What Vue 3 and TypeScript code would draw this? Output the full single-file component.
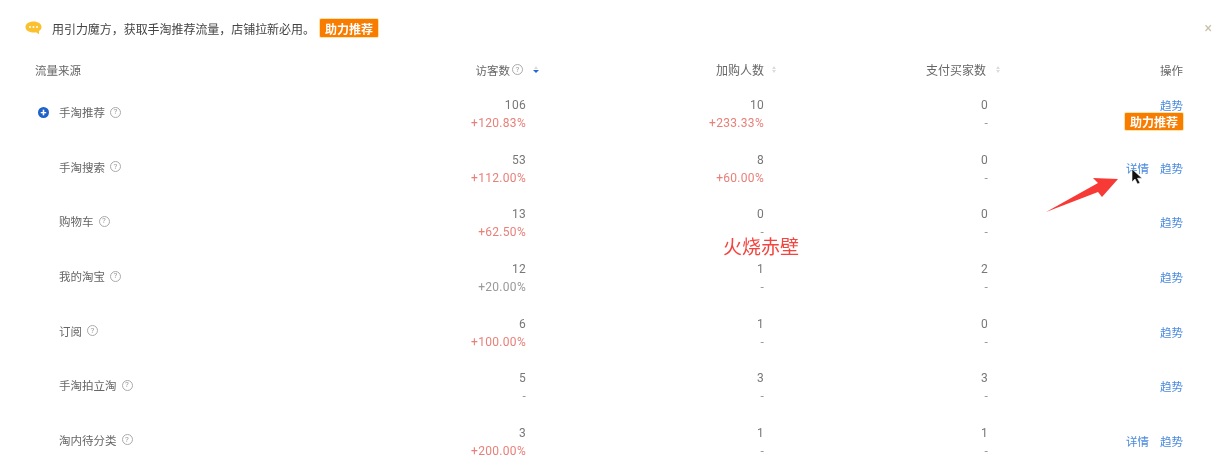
<script setup lang="ts">
interface Metric { value: string; change: string; tone?: 'up' | 'flat' }
interface Row { name: string; expand?: boolean; cells: Metric[]; detail?: boolean; boost?: boolean }

const up = (value: string, change: string): Metric => ({ value, change, tone: 'up' })
const flat = (value: string, change = '-'): Metric => ({ value, change, tone: 'flat' })

const rows: Row[] = [
  { name: '手淘推荐', expand: true, boost: true, cells: [up('106', '+120.83%'), up('10', '+233.33%'), flat('0')] },
  { name: '手淘搜索', detail: true, cells: [up('53', '+112.00%'), up('8', '+60.00%'), flat('0')] },
  { name: '购物车', cells: [up('13', '+62.50%'), flat('0'), flat('0')] },
  { name: '我的淘宝', cells: [flat('12', '+20.00%'), flat('1'), flat('2')] },
  { name: '订阅', cells: [up('6', '+100.00%'), flat('1'), flat('0')] },
  { name: '手淘拍立淘', cells: [flat('5'), flat('3'), flat('3')] },
  { name: '淘内待分类', detail: true, cells: [up('3', '+200.00%'), flat('1'), flat('1')] },
]
</script>

<template>
  <div class="page">
    <div class="banner">
      <svg class="chat" viewBox="0 0 17 14" width="17" height="14">
        <path d="M8.5 0.5C4 0.5 0.5 2.8 0.5 6s3.500 5.500 8 5.500c.9 0 1.700-.1 2.500-.3L14 13.300v-3.200c1.600-1 2.500-2.400 2.500-4.100 0-3.200-3.500-5.500-8-5.500z" fill="#fbc02d" />
        <circle cx="5" cy="6" r="1" fill="#fff" />
        <circle cx="8.500" cy="6" r="1" fill="#fff" />
        <circle cx="12" cy="6" r="1" fill="#fff" />
      </svg>
      <span class="banner-text">用引力魔方，获取手淘推荐流量，店铺拉新必用。</span>
      <span class="boost">助力推荐</span>
      <span class="close">×</span>
    </div>

    <div class="table">
      <div class="head">
        <div class="col-name">流量来源</div>
        <div class="col-num head-num">访客数<i class="tip tip-head">?</i><span class="sort"><b class="tri-up"></b><b class="tri-down on"></b></span></div>
        <div class="col-num head-num head-wide">加购人数<span class="sort"><b class="tri-up"></b><b class="tri-down"></b></span></div>
        <div class="col-num head-num head-wide">支付买家数<span class="sort"><b class="tri-up"></b><b class="tri-down"></b></span></div>
        <div class="col-act">操作</div>
      </div>

      <div v-for="row in rows" :key="row.name" class="row">
        <div class="col-name name">
          <span class="plus-slot"><span v-if="row.expand" class="plus">+</span></span>
          <span>{{ row.name }}</span><i class="tip">?</i>
        </div>
        <div v-for="(c, i) in row.cells" :key="i" class="col-num num">
          <div class="value">{{ c.value }}</div>
          <div :class="c.tone === 'up' ? 'change-up' : 'change-flat'">{{ c.change }}</div>
        </div>
        <div class="col-act act">
          <div class="links">
            <a v-if="row.detail">详情</a>
            <a>趋势</a>
          </div>
          <span v-if="row.boost" class="boost boost-row">助力推荐</span>
        </div>
      </div>
    </div>

    <div class="watermark">火烧赤壁</div>

    <svg class="arrow" viewBox="0 0 76 38" width="76" height="38">
      <polygon points="0,36 52,7 47,2 72,3 56,21 52,16" fill="#f83a36" />
    </svg>
    <svg class="cursor" viewBox="0 0 12 18" width="12" height="18">
      <path d="M1 1v13l3-3 2.500 5 2.500-1-2.500-4.800H11z" fill="#111" stroke="#fff" stroke-width=".6" />
    </svg>
  </div>
</template>

<style scoped>
.page {
  position: relative;
  width: 1219px;
  height: 465px;
  overflow: hidden;
  background: #fff;
  color: #666;
  font-family: Roboto, "Noto Sans CJK SC", sans-serif;
  font-size: 11.500px;
  filter: blur(0.5px);
}
.banner {
  display: flex;
  align-items: center;
  height: 56px;
  padding: 0 7px 0 25px;
  color: #444;
  font-size: 12px;
}
.chat { flex: none; }
.banner-text { margin-left: 10px; letter-spacing: -0.05px; }
.boost {
  display: inline-flex;
  align-items: center;
  justify-content: center;
  width: 58px;
  height: 18px;
  background: #f77c00;
  color: #fff;
  font-size: 12px;
  font-weight: 700;
  border-radius: 1px;
  box-shadow: 0 0 0 1px #ffe3a6;
}
.banner .boost { margin-left: 5px; }
.close {
  margin-left: auto;
  color: #c8bfa6;
  font-size: 14px;
  line-height: 1;
}
.table { padding: 0 36px 0 35px; }
.head, .row {
  display: grid;
  grid-template-columns: 1fr 220px 238px 224px 175px;
}
.head {
  height: 27px;
  margin-bottom: 4px;
  align-items: center;
  color: #666;
}
.row {
  height: 54.600px;
  align-items: center;
}
.col-num { padding-right: 20px; text-align: right; }
.col-act { text-align: right; }
.head-num {
  display: flex;
  justify-content: flex-end;
  align-items: center;
  position: relative;
}
.head-wide { font-size: 12px; }
.head-wide + .head-wide { padding-right: 22px; }
.sort {
  position: absolute;
  right: 0;
  top: 50%;
  width: 20px;
  height: 9px;
  margin-top: -4px;
  display: flex;
  flex-direction: column;
  align-items: center;
  gap: 1px;
}
.tri-up, .tri-down { width: 0; height: 0; border-left: 2.500px solid transparent; border-right: 2.500px solid transparent; }
.tri-up { border-bottom: 3px solid #dcdcdc; }
.tri-down { border-top: 3px solid #dcdcdc; }
.tri-down.on { border-top-color: #2468d8; border-left-width: 3.500px; border-right-width: 3.500px; }
.tip {
  display: inline-flex;
  align-items: center;
  justify-content: center;
  box-sizing: border-box;
  width: 11px;
  height: 11px;
  margin-left: 5px;
  border: 1px solid #aaa;
  border-radius: 50%;
  color: #999;
  font-size: 8px;
  font-style: normal;
  line-height: 1;
}
.tip-head { margin-left: 2px; margin-right: 3px; }
.name {
  display: flex;
  align-items: center;
  margin-top: -4px;
}
.plus-slot {
  display: inline-flex;
  align-items: center;
  width: 24px;
  padding-left: 3px;
  box-sizing: border-box;
}
.plus {
  display: inline-flex;
  align-items: center;
  justify-content: center;
  width: 11px;
  height: 11px;
  border-radius: 50%;
  background: #1f62c9;
  color: #fff;
  font-size: 11px;
  font-weight: 700;
  line-height: 1;
}
.num { line-height: 18px; font-size: 12px; letter-spacing: 0.3px; }
.value { color: #777; }
.change-up { color: #e8807a; }
.change-flat { color: #999; }
.act {
  display: flex;
  flex-direction: column;
  align-items: flex-end;
}
.links { display: flex; gap: 11px; line-height: 16px; }
.links a { color: #4a8ade; }
.boost-row { margin-top: -1px; height: 17px; width: 58px; }
.watermark {
  position: absolute;
  left: 723px;
  top: 235px;
  color: #f4443f;
  font-size: 19px;
  line-height: 26px;
}
.arrow { position: absolute; left: 1046px; top: 176px; }
.cursor { position: absolute; left: 1131px; top: 168px; }
</style>
